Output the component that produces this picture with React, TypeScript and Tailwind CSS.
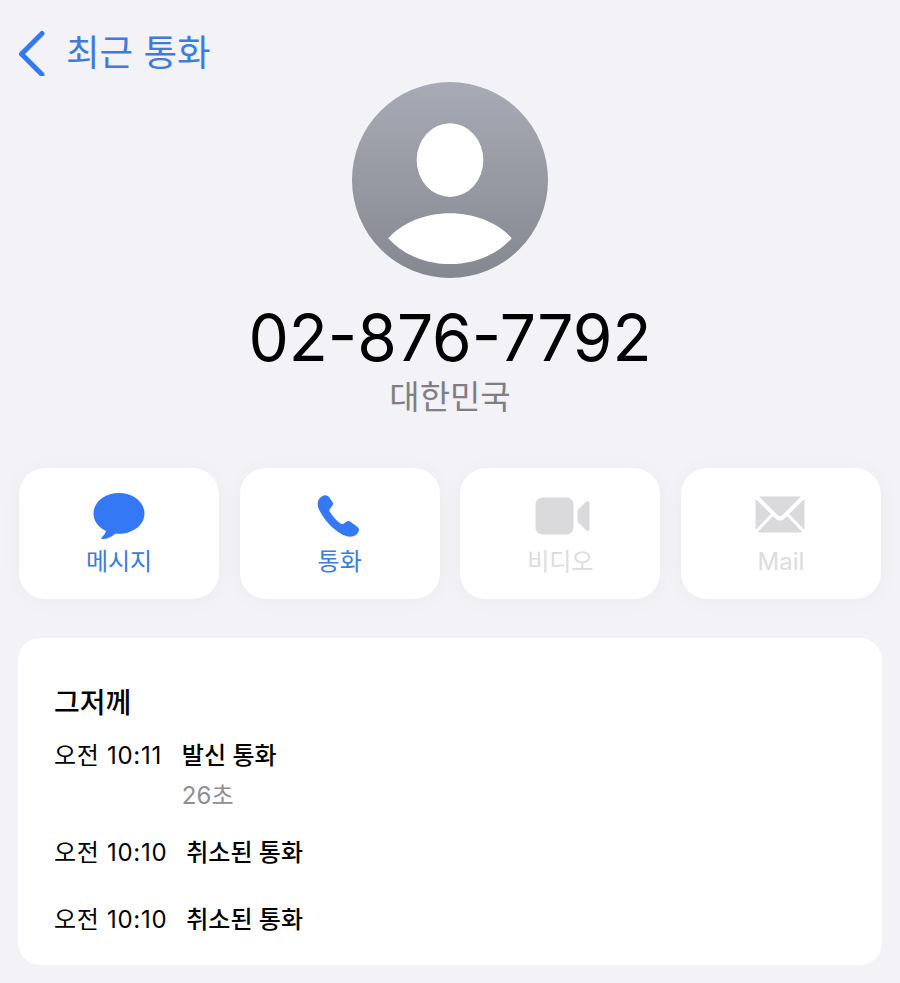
const font = "font-['Inter','Noto_Sans_CJK_KR',sans-serif]";

const ChevronBack = () => (
  <svg width="28" height="46" viewBox="0 0 28 46" fill="none">
    <path d="M23 3.500 2.500 24 23 44.500" stroke="#3478f6" strokeWidth="5" strokeLinecap="round" strokeLinejoin="round" />
  </svg>
);

const Avatar = () => (
  <svg width="196" height="196" viewBox="0 0 197 197" className="block">
    <defs>
      <linearGradient id="avatarFill" x1="0" y1="0" x2="0" y2="1">
        <stop offset="0" stopColor="#a8abb5" />
        <stop offset="1" stopColor="#858890" />
      </linearGradient>
    </defs>
    <circle cx="98.5" cy="98.5" r="98.5" fill="url(#avatarFill)" />
    <ellipse cx="98.5" cy="78.5" rx="33.5" ry="37" fill="#fff" />
    <path d="M36.500 157C50 142 73 132 98.500 132s48.500 10 62 25c-14 16-36.500 26-62 26s-48-10-62-26Z" fill="#fff" />
  </svg>
);

const MessageIcon = () => (
  <svg width="52" height="48" viewBox="0 0 52 48">
    <path
      d="M26 1C12 1 .5 10 .5 21.500.5 29 5.500 35.500 13 39 12.500 41.500 10.500 43.500 8.500 45.500 8 46.500 8.500 47 9.500 47 14 47 19 45 22.500 41.500 23.600 41.700 24.800 41.800 26 41.800 40 41.800 51.500 32.800 51.500 21.500 51.500 10 40 1 26 1Z"
      fill="#3478f6"
    />
  </svg>
);

const PhoneIcon = () => (
  <svg width="44" height="44" viewBox="0 0 44 44" className="-translate-x-[2px]">
    <path
      d="M10.500 1.500C8 .8 4.500 2.800 2.800 5.500 1 8.500 1.500 12.500 3.500 16.500 8 25.500 15.500 34 24.500 39.500 29 42.300 33.500 43.200 37 42.300 40 41.600 42.500 39 42.900 36.500 43.100 35 42.500 33.800 41.200 32.800L34.500 27.800C33.200 26.900 32 26.800 30.700 27.600L27.500 29.800C26.500 30.400 25.500 30.300 24.600 29.600 20 26 16.300 21.800 13.600 17.400 13.100 16.400 13.200 15.500 13.900 14.700L16.300 11.700C17.200 10.600 17.300 9.400 16.500 8.100L12.800 2.800C12.200 2.100 11.500 1.700 10.500 1.500Z"
      fill="#3478f6"
    />
  </svg>
);

const VideoIcon = () => (
  <svg width="56" height="38" viewBox="0 0 56 38" className="translate-x-[3px]">
    <rect x="0.500" y="0.500" width="38" height="37" rx="7" fill="#dadadc" />
    <path d="M42.500 14.500c0-1 .4-1.800 1.200-2.500l7.500-7.500c1.400-1.200 3.300-.6 3.300 1.500v26c0 2.100-1.900 2.700-3.300 1.500l-7.500-7.500c-.8-.7-1.200-1.500-1.200-2.500Z" fill="#dadadc" />
  </svg>
);

const MailIcon = () => (
  <svg width="50" height="40" viewBox="0 0 50 40" className="-translate-x-[1px]">
    <path d="M4 .5h42L27.500 19c-1.500 1.400-3.500 1.400-5 0Z" fill="#dadadc" />
    <path d="M.5 3 16 18 .8 33.500c-.2-.6-.3-1.300-.3-2Z" fill="#dadadc" />
    <path d="M49.500 3 34 18l15.200 15.500c.2-.6.3-1.300.3-2Z" fill="#dadadc" />
    <path d="M18 20l3 2.900c2.300 2 5.700 2 8 0l3-2.900 15 15.800c-.8.5-1.700.7-2.500.7h-39c-.8 0-1.700-.2-2.500-.7Z" fill="#dadadc" />
  </svg>
);

const ActionButton = ({
  icon,
  label,
  disabled,
}: {
  icon: React.ReactNode;
  label: string;
  disabled?: boolean;
}) => (
  <div className="flex h-[131px] flex-col items-center rounded-[26px] bg-white pt-[24px] shadow-[0_2px_22px_rgba(0,0,0,0.035)]">
    <div className="flex h-[48px] items-center">{icon}</div>
    <span className={`mt-[7px] text-[24px] leading-[30px] ${disabled ? "text-[#dcdcde]" : "text-[#3d7bdc]"}`}>
      {label}
    </span>
  </div>
);

const CallRow = ({
  time,
  label,
  detail,
  rowClass,
  gapClass,
}: {
  time: string;
  label: string;
  detail?: string;
  rowClass: string;
  gapClass: string;
}) => (
  <div className={`flex ${rowClass}`}>
    <span className={`text-[24px] leading-[30px] tracking-[0.7px] text-black ${gapClass}`}>{time}</span>
    <div>
      <div className="text-[24px] font-medium leading-[30px] text-black">{label}</div>
      {detail && <div className="mt-[10px] text-[24px] leading-[30px] text-[#8e8e93]">{detail}</div>}
    </div>
  </div>
);

export default function App() {
  return (
    <div className={`h-[983px] w-[900px] overflow-hidden bg-[#f2f2f7] ${font}`}>
      <div className="flex h-[82px] items-start pl-[19px] pt-[30px]">
        <ChevronBack />
        <span className="ml-[19px] text-[36.500px] leading-[46px] text-[#3d7bdc]">최근 통화</span>
      </div>

      <div className="flex flex-col items-center">
        <Avatar />
        <h1 className="mt-[20px] text-[64px] font-normal leading-[80px] text-black">02-876-7792</h1>
        <p className="-mt-[1px] text-[33px] leading-[40px] text-[#7f7f83]">대한민국</p>
      </div>

      <div className="mt-[51px] grid grid-cols-4 gap-x-[20.500px] px-[19px]">
        <ActionButton icon={<MessageIcon />} label="메시지" />
        <ActionButton icon={<PhoneIcon />} label="통화" />
        <ActionButton icon={<VideoIcon />} label="비디오" disabled />
        <ActionButton icon={<MailIcon />} label="Mail" disabled />
      </div>

      <div className="mx-[18px] mt-[39px] h-[327px] rounded-[22px] bg-white pl-[36px] pt-[49px]">
        <h2 className="text-[28px] font-medium leading-[32px] text-black">그저께</h2>
        <CallRow time="오전 10:11" label="발신 통화" detail="26초" gapClass="mr-[20px]" rowClass="mt-[22px]" />
        <CallRow time="오전 10:10" label="취소된 통화" gapClass="mr-[19px]" rowClass="mt-[27px]" />
        <CallRow time="오전 10:10" label="취소된 통화" gapClass="mr-[19px]" rowClass="mt-[37px]" />
      </div>
    </div>
  );
}
